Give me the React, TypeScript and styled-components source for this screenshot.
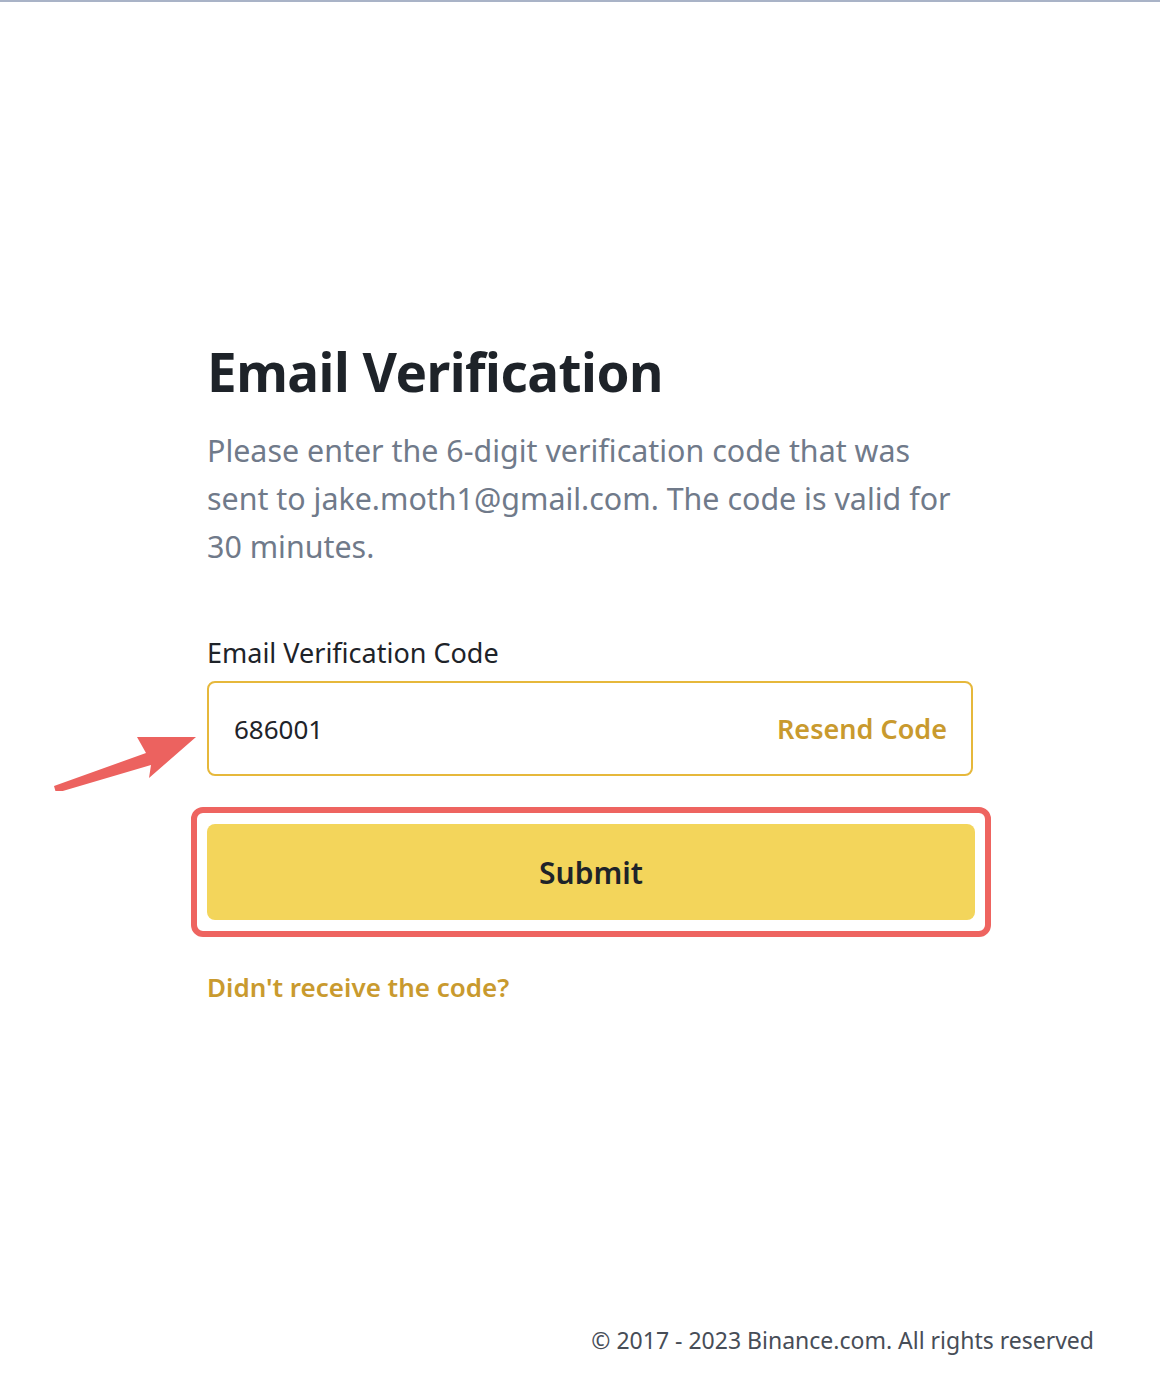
import styled, { createGlobalStyle } from 'styled-components'

const GlobalStyle = createGlobalStyle`
  html, body {
    margin: 0;
    padding: 0;
    background: #ffffff;
  }
  body {
    font-family: "Noto Sans", "Open Sans", Arial, sans-serif;
    color: #1e2329;
  }
`

const Page = styled('div')`
  min-height: 1380px;
  box-sizing: border-box;
  border-top: 2px solid #a9b3c7;
  display: flex;
  flex-direction: column;
`
const Main = styled('main')`
  flex: 1;
  padding: 335px 0 0 207px;
`
const Form = styled('section')`
  width: 766px;
  display: flex;
  flex-direction: column;
`
const Heading = styled('h1')`
  margin: 0;
  font-size: 53px;
  line-height: 70px;
  font-weight: 700;
  color: #1e2329;
  letter-spacing: -0.5px;
`
const Description = styled('p')`
  margin: 20px 0 0;
  width: 756px;
  font-size: 30.4px;
  line-height: 48px;
  color: #707a8a;
`
const Label = styled('label')`
  margin-top: 64px;
  font-size: 27px;
  line-height: 36px;
  color: #1e2329;
`
const Field = styled('div')`
  position: relative;
  margin-top: 10px;
  height: 95px;
  box-sizing: border-box;
  border: 2px solid #e6b83b;
  border-radius: 8px;
  display: flex;
  align-items: center;
  justify-content: space-between;
  padding: 0 24px 0 25px;
`
const CodeValue = styled('span')`
  font-size: 26px;
  color: #1e2329;
`
const LinkText = styled('span')`
  font-size: 27px;
  font-weight: 600;
  color: #c99a2e;
`
const Pointer = styled('svg')`
  position: absolute;
  left: -155px;
  top: 48px;
`
const Highlight = styled('div')`
  margin: 31px 0 0 -16px;
  width: 800px;
  box-sizing: border-box;
  border: 6px solid #ee6460;
  border-radius: 12px;
  padding: 11px 10px;
`
const SubmitButton = styled('button')`
  display: block;
  width: 100%;
  height: 96px;
  border: 0;
  border-radius: 8px;
  background: #f3d55b;
  font-family: inherit;
  font-size: 30px;
  font-weight: 600;
  color: #1e2329;
`
const HelpLink = styled(LinkText)`
  margin-top: 30px;
  font-size: 26px;
  line-height: 40px;
`
const Footer = styled('footer')`
  text-align: right;
  padding: 0 66px 23px 0;
  font-size: 23px;
  line-height: 34px;
  color: #474d57;
`

const App = (): JSX.Element => {
  return (
    <Page>
      <GlobalStyle />
      <Main>
        <Form>
          <Heading>Email Verification</Heading>
          <Description>
            Please enter the 6-digit verification code that was sent to jake.moth1@gmail.com. The code is valid for 30 minutes.
          </Description>
          <Label>Email Verification Code</Label>
          <Field>
            <CodeValue>686001</CodeValue>
            <LinkText>Resend Code</LinkText>
            <Pointer width='150' height='60' viewBox='0 0 150 60'>
              <polygon points='0,55 2,62 97,34 95,47 142,6 83,6 92,22' fill='#ec625f' />
            </Pointer>
          </Field>
          <Highlight>
            <SubmitButton>Submit</SubmitButton>
          </Highlight>
          <HelpLink>Didn&apos;t receive the code?</HelpLink>
        </Form>
      </Main>
      <Footer>© 2017 - 2023 Binance.com. All rights reserved</Footer>
    </Page>
  )
}

export default App
